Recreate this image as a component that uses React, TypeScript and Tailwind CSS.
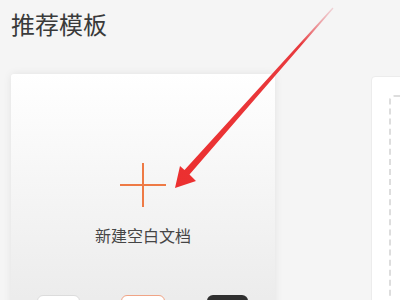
import React from "react";

export default function App() {
  return (
    <div
      className="relative w-[400px] h-[300px] overflow-hidden bg-[#f5f5f5]"
      style={{ fontFamily: '"Noto Sans CJK SC", "Noto Sans", sans-serif' }}
    >
      <div className="pl-[11px] pt-[8px] text-[24px] leading-[32px] text-[#3a3a3a]">推荐模板</div>
      <div className="flex items-start mt-[34px] pl-[11px]">
        <div className="w-[264px] h-[260px] shrink-0 rounded-[3px] bg-gradient-to-b from-white to-[#e9e9e9] shadow-[0_0_8px_rgba(0,0,0,0.08)] flex flex-col items-center pt-[89px]">
          <svg width="46" height="44" viewBox="0 0 46 44">
            <line x1="0" y1="22" x2="46" y2="22" stroke="#ee7a45" strokeWidth="2" />
            <line x1="23" y1="0" x2="23" y2="44" stroke="#ee7a45" strokeWidth="2" />
          </svg>
          <div className="mt-[16px] text-[16px] leading-[24px] text-[#454545]">新建空白文档</div>
          <div className="mt-[48px] w-full flex pl-[26px] gap-0">
            <div className="w-[43px] h-[20px] bg-white border border-[#dcdcdc] rounded-[6px]" />
            <div className="ml-[41px] w-[44px] h-[20px] bg-white border border-[#f0a486] rounded-[6px]" />
            <div className="ml-[42px] w-[41px] h-[20px] bg-[#2f2f2f] rounded-[6px]" />
          </div>
        </div>
        <div className="ml-[96px] mt-[2px] w-[60px] h-[240px] shrink-0 bg-white border border-[#ececec] rounded-[4px] pl-[17px] pt-[18px]">
          <div className="w-[60px] h-[220px] border-2 border-dashed border-[#dddddd] rounded-[5px]" />
        </div>
      </div>
      <svg className="absolute left-0 top-0" width="400" height="300" viewBox="0 0 400 300">
        <defs>
          <linearGradient id="ag" x1="175" y1="188" x2="333" y2="8" gradientUnits="userSpaceOnUse">
            <stop offset="0" stopColor="#ec2f2f" />
            <stop offset="0.8" stopColor="#e83a3e" />
            <stop offset="1" stopColor="#e8a0a8" stopOpacity="0.4" />
          </linearGradient>
        </defs>
        <polygon
          points="175,188 180,166 184.5,170 332.5,7.5 333.5,8.5 189.5,174.5 196,181"
          fill="url(#ag)"
        />
      </svg>
    </div>
  );
}
